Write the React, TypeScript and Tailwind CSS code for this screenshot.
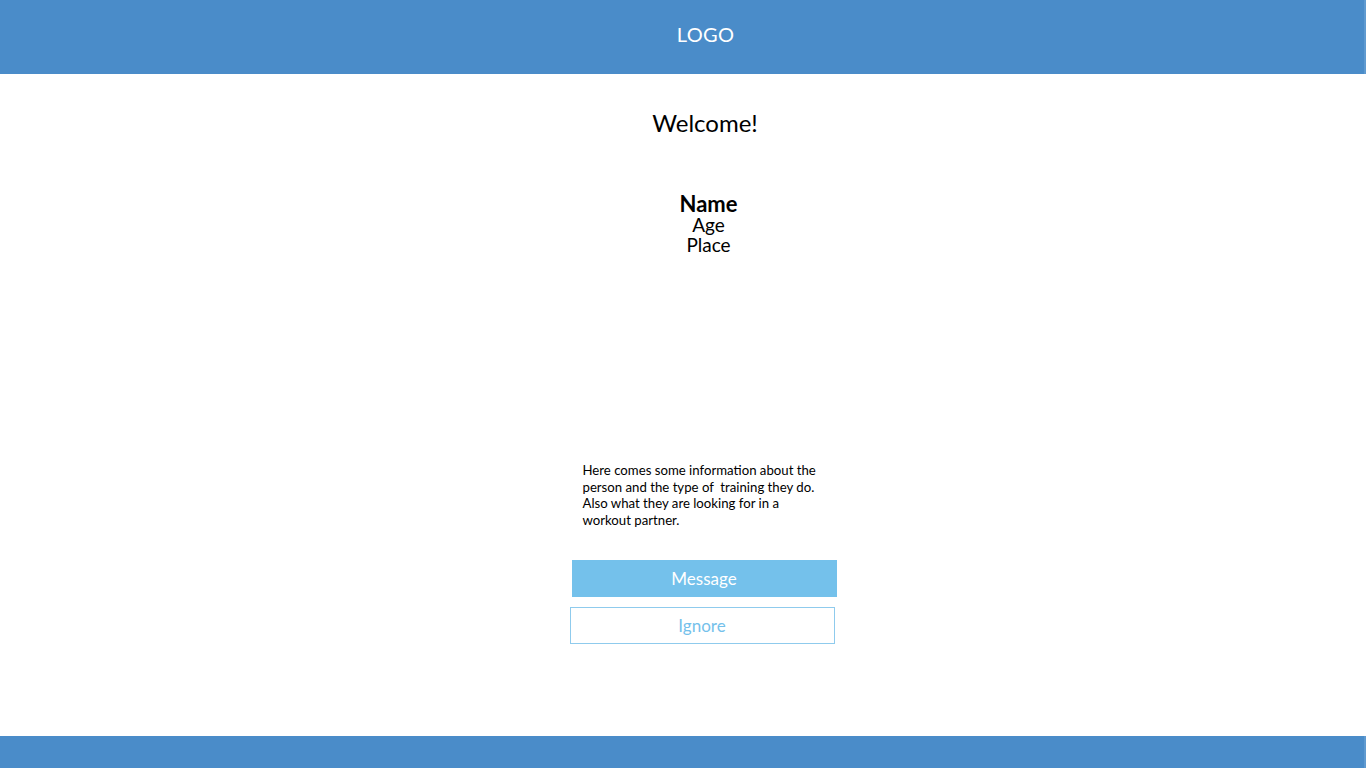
export default function App() {
  return (
    <div className="h-screen w-full flex flex-col bg-white overflow-hidden" style={{ fontFamily: 'Lato, "Open Sans", sans-serif' }}>
      {/* Header */}
      <header className="h-[74px] shrink-0 bg-[#4a8cc9] flex items-center justify-center pl-[47px] pb-[6px] border-r-2 border-[#5f9ad0]">
        <span className="text-white text-[20px] leading-none tracking-[0.3px]">LOGO</span>
      </header>

      {/* Profile */}
      <main className="flex-1 flex flex-col items-center pl-[44px] text-black">
        <h1 className="mt-[33px] text-[24px] leading-[32px]">Welcome!</h1>

        <div className="mt-[54px] flex flex-col items-center pl-[7px] text-[19px] leading-[20px]">
          <span className="font-bold text-[22px] leading-[22px]">Name</span>
          <span>Age</span>
          <span>Place</span>
        </div>

        <div className="mt-[207px] w-[265px] flex flex-col -ml-[2px]">
          <p className="px-[11px] text-[13.2px] leading-[16.7px]">
            Here comes some information about the person and the type of&nbsp; training they do. Also what they are looking for in a workout partner.
          </p>

          <button className="mt-[31px] h-[37px] w-full bg-[#74c1eb] text-white text-[17px]">
            Message
          </button>
          <button className="mt-[10px] -ml-[2px] h-[37px] w-full border border-[#8fcbed] bg-white text-[#74c1eb] text-[17px]">
            Ignore
          </button>
        </div>
      </main>

      {/* Footer */}
      <footer className="h-[32px] shrink-0 bg-[#4a8cc9] border-r-2 border-[#5f9ad0]" />
    </div>
  )
}
